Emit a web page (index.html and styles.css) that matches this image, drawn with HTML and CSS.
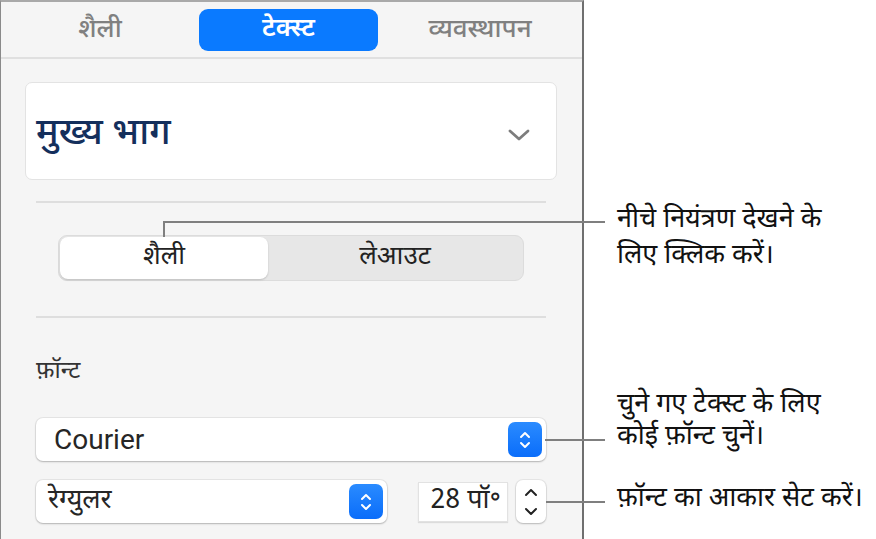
FILE: index.html
```html
<!DOCTYPE html>
<html lang="hi">
<head>
    <meta charset="UTF-8">
    <title>टेक्स्ट फ़ॉर्मेट</title>
    <link rel="stylesheet" href="styles.css">
</head>
<body>
<div class="page">
    <!-- Inspector panel -->
    <div class="panel">
        <div class="tabs">
            <span class="tab">शैली</span>
            <span class="tab active">टेक्स्ट</span>
            <span class="tab">व्यवस्थापन</span>
        </div>

        <div class="style-card">
            <span class="style-name">मुख्य भाग</span>
            <svg class="chevron" width="24" height="14" viewBox="0 0 24 14">
                <path d="M3 3 L12 11 L21 3" fill="none" stroke="#7d7d7d" stroke-width="2.8" stroke-linecap="round" stroke-linejoin="round"/>
            </svg>
        </div>

        <div class="section">
            <hr class="sep">
            <div class="segmented">
                <span class="seg selected">शैली</span>
                <span class="seg">लेआउट</span>
            </div>
            <hr class="sep">

            <div class="label">फ़ॉन्ट</div>

            <div class="popup font-popup">
                <span class="popup-text latin">Courier</span>
                <span class="blue-step">
                    <svg width="14" height="24" viewBox="0 0 14 24">
                        <path d="M3 9 L7 5 L11 9 M3 15 L7 19 L11 15" fill="none" stroke="#fff" stroke-width="2" stroke-linecap="round" stroke-linejoin="round"/>
                    </svg>
                </span>
            </div>

            <div class="row">
                <div class="popup weight-popup">
                    <span class="popup-text">रेग्युलर</span>
                    <span class="blue-step">
                        <svg width="14" height="24" viewBox="0 0 14 24">
                            <path d="M3 9 L7 5 L11 9 M3 15 L7 19 L11 15" fill="none" stroke="#fff" stroke-width="2" stroke-linecap="round" stroke-linejoin="round"/>
                        </svg>
                    </span>
                </div>
                <div class="size-field">28 पॉ॰</div>
                <div class="stepper">
                    <svg width="16" height="38" viewBox="0 0 16 38">
                        <path d="M3 12 L8 7 L13 12" fill="none" stroke="#222" stroke-width="2" stroke-linecap="round" stroke-linejoin="round"/>
                        <path d="M3 26 L8 31 L13 26" fill="none" stroke="#222" stroke-width="2" stroke-linecap="round" stroke-linejoin="round"/>
                    </svg>
                </div>
            </div>
        </div>
    </div>

    <!-- Callouts -->
    <div class="leader leader-seg"></div>
    <div class="leader leader-seg-v"></div>
    <div class="leader leader-font"></div>
    <div class="leader leader-size"></div>

    <p class="note note-seg">नीचे नियंत्रण देखने के<br>लिए क्लिक करें।</p>
    <p class="note note-font">चुने गए टेक्स्ट के लिए<br>कोई फ़ॉन्ट चुनें।</p>
    <p class="note note-size">फ़ॉन्ट का आकार सेट करें।</p>
</div>
</body>
</html>
```

FILE: styles.css
```css
body {
    margin: 0;
    background: #fff;
    font-family: "Noto Sans Devanagari", "Noto Sans", "Liberation Sans", sans-serif;
    color: #1a1a1a;
}
.page {
    position: relative;
    width: 876px;
    height: 539px;
    overflow: hidden;
}
.panel {
    width: 584px;
    height: 539px;
    box-sizing: border-box;
    background: #f5f5f5;
    border-top: 2px solid #a9a9a9;
    border-left: 1px solid #8a8a8a;
    border-right: 2px solid #6f6f6f;
}

/* tab bar */
.tabs {
    display: grid;
    grid-template-columns: 198px 179px 1fr;
    align-items: center;
    height: 55px;
    border-bottom: 2px solid #e0e0e0;
}
.tab {
    text-align: center;
    font-size: 26px;
    font-weight: 500;
    color: #808080;
    padding-top: 3px;
}
.tab.active {
    background: #0a7aff;
    color: #fff;
    font-weight: 600;
    border-radius: 9px;
    height: 42px;
    line-height: 42px;
    padding-top: 0;
}

/* paragraph style card */
.style-card {
    margin: 23px 25px 0 24px;
    height: 96px;
    box-sizing: content-box;
    background: #fff;
    border: 1px solid #e3e3e3;
    border-radius: 7px;
    display: flex;
    align-items: center;
    justify-content: space-between;
    padding: 0 25px 0 10px;
}
.style-name {
    font-size: 37px;
    font-weight: 500;
    color: #142f5c;
    padding-top: 8px;
}
.chevron {
    margin-top: 8px;
}

.section {
    padding: 0 36px 0 35px;
}
.sep {
    border: none;
    border-top: 2px solid #dedede;
    margin: 0;
}
.section > .sep:first-child {
    margin-top: 21px;
}

/* segmented control */
.segmented {
    display: flex;
    margin: 32px 22px 35px 22px;
    height: 46px;
    box-sizing: border-box;
    background: #e7e7e7;
    border: 1px solid #dcdcdc;
    border-radius: 9px;
    padding: 1px;
}
.seg {
    flex: 1;
    text-align: center;
    line-height: 42px;
    font-size: 26px;
    color: #222;
}
.seg.selected {
    flex: 0 0 208px;
    background: #fff;
    border-radius: 8px;
    box-shadow: 0 1px 2px rgba(0, 0, 0, 0.18);
}

.label {
    margin-top: 38px;
    font-size: 24px;
    color: #333;
    line-height: 32px;
}

/* popups */
.popup {
    display: flex;
    align-items: center;
    justify-content: space-between;
    box-sizing: border-box;
    height: 43px;
    background: #fff;
    border-radius: 7px;
    box-shadow: 0 0 0 1px rgba(0, 0, 0, 0.06), 0 1px 2px rgba(0, 0, 0, 0.22);
    padding: 0 4px 0 12px;
}
.font-popup {
    margin-top: 30px;
}
.popup-text {
    font-size: 27px;
    color: #262626;
}
.popup-text.latin {
    font-family: Roboto, "Liberation Sans", sans-serif;
    font-size: 28px;
    padding-left: 6px;
}
.blue-step {
    width: 34px;
    height: 35px;
    border-radius: 7px;
    background: linear-gradient(#2a8bff, #0a6dfa);
    display: flex;
    align-items: center;
    justify-content: center;
}

.row {
    display: flex;
    align-items: center;
    margin-top: 19px;
}
.weight-popup {
    width: 351px;
}
.size-field {
    margin-left: 31px;
    width: 90px;
    height: 40px;
    box-sizing: border-box;
    background: #fff;
    border: 1px solid #e2e2e2;
    box-shadow: 0 1px 1px rgba(0, 0, 0, 0.1);
    font-size: 27px;
    line-height: 38px;
    text-align: right;
    padding-right: 6px;
    color: #222;
    white-space: nowrap;
}
.stepper {
    margin-left: 8px;
    width: 30px;
    height: 43px;
    box-sizing: border-box;
    background: #fff;
    border-radius: 7px;
    box-shadow: 0 0 0 1px rgba(0, 0, 0, 0.06), 0 1px 2px rgba(0, 0, 0, 0.2);
    display: flex;
    align-items: center;
    justify-content: center;
}

/* leader lines and notes */
.leader {
    position: absolute;
    background: #7f7f7f;
}
.leader-seg {
    left: 163px;
    top: 221px;
    width: 442px;
    height: 2px;
}
.leader-seg-v {
    left: 163px;
    top: 221px;
    width: 2px;
    height: 16px;
}
.leader-font {
    left: 545px;
    top: 439px;
    width: 60px;
    height: 2px;
}
.leader-size {
    left: 546px;
    top: 501px;
    width: 59px;
    height: 2px;
}
.note {
    position: absolute;
    left: 617px;
    margin: 0;
    font-size: 27px;
    line-height: 36px;
    color: #111;
    white-space: nowrap;
}
.note-seg {
    top: 203px;
}
.note-font {
    top: 390px;
    line-height: 32px;
}
.note-size {
    top: 482px;
}
```
